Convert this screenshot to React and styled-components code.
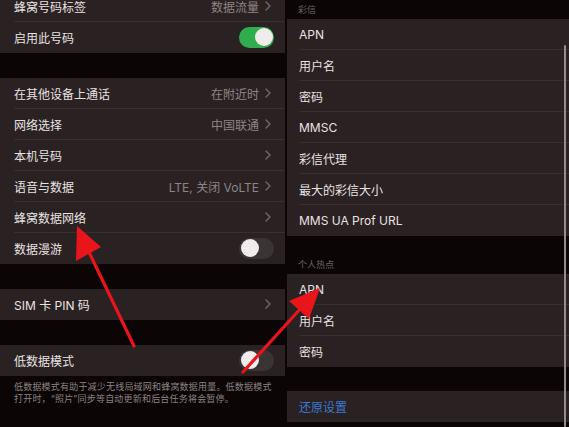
import React from 'react';
import styled, { createGlobalStyle } from 'styled-components';

const GlobalStyle = createGlobalStyle`
  html, body {
    margin: 0;
    padding: 0;
    background: #0c0506;
  }
  body {
    width: 569px;
    height: 427px;
    overflow: hidden;
    font-family: "Inter", "Noto Sans CJK SC", sans-serif;
  }
`;

const Page = styled.div`
  position: relative;
  width: 569px;
  height: 427px;
  display: flex;
  gap: 2px;
  overflow: hidden;
  background: #0c0506;
`;

const Panel = styled.div`
  position: relative;
  width: ${(p) => p.width}px;
  flex-shrink: 0;
  overflow: hidden;
  display: flex;
  flex-direction: column;
`;

const Scroll = styled.div`
  display: flex;
  flex-direction: column;
  margin-top: ${(p) => p.offset || 0}px;
`;

const Group = styled.div`
  background: #2a2122;
`;

const Row = styled.div`
  position: relative;
  height: 31px;
  display: flex;
  align-items: center;
  justify-content: space-between;
  padding: 0 ${(p) => p.padRight || 14}px 0 ${(p) => p.padLeft || 14}px;
  box-sizing: border-box;

  &:not(:last-child)::after {
    content: '';
    position: absolute;
    left: ${(p) => p.padLeft || 14}px;
    right: 0;
    bottom: 0;
    height: 1px;
    background: #382f30;
  }
`;

const Label = styled.span`
  font-size: 12px;
  color: ${(p) => (p.link ? '#3b7ad2' : '#e8e3e3')};
  white-space: nowrap;
`;

const Trail = styled.span`
  display: flex;
  align-items: center;
  gap: 6px;
`;

const Value = styled.span`
  font-size: 12px;
  color: #8b8586;
  white-space: nowrap;
`;

const Gap = styled.div`
  height: ${(p) => p.h}px;
`;

const Header = styled.div`
  height: ${(p) => p.h}px;
  box-sizing: border-box;
  display: flex;
  align-items: flex-end;
  padding: 0 0 4px 11px;
  font-size: 9px;
  line-height: 11px;
  color: #6d6667;
`;

const Note = styled.div`
  padding: 5px 10px 0 14px;
  font-size: 9px;
  letter-spacing: 0.2px;
  line-height: 12px;
  color: #8a8384;
`;

const Switch = styled.span`
  width: 35px;
  height: 21px;
  box-sizing: border-box;
  border-radius: 11px;
  padding: 0 1.5px;
  display: flex;
  align-items: center;
  justify-content: ${(p) => (p.on ? 'flex-end' : 'flex-start')};
  background: ${(p) => (p.on ? '#30ad4f' : '#3b3435')};
  margin-right: -3px;
`;

const Knob = styled.span`
  width: 18px;
  height: 18px;
  border-radius: 50%;
  background: #f1ecec;
`;

const ScrollBar = styled.div`
  position: absolute;
  right: 3px;
  top: 45px;
  bottom: 0;
  width: 2px;
  border-radius: 1px;
  background: #938d8e;
`;

const Overlay = styled.svg`
  position: absolute;
  left: 0;
  top: 0;
  pointer-events: none;
`;

const Chevron = () => (
  <svg width="6" height="10" viewBox="0 0 6 10">
    <path d="M1 1 L5 5 L1 9" fill="none" stroke="#6f6869" strokeWidth="1.4" strokeLinecap="round" strokeLinejoin="round" />
  </svg>
);

const NavRow = ({ label, value }) => (
  <Row>
    <Label>{label}</Label>
    <Trail>
      {value && <Value>{value}</Value>}
      <Chevron />
    </Trail>
  </Row>
);

const ToggleRow = ({ label, on }) => (
  <Row>
    <Label>{label}</Label>
    <Switch on={on ? 1 : 0}>
      <Knob />
    </Switch>
  </Row>
);

const mmsItems = ['APN', '用户名', '密码', 'MMSC', '彩信代理', '最大的彩信大小', 'MMS UA Prof URL'];
const hotspotItems = ['APN', '用户名', '密码'];

export default function App() {
  return (
    <Page>
      <GlobalStyle />
      <Panel width={285}>
        <Scroll offset={-9.5}>
          <Group>
            <NavRow label="蜂窝号码标签" value="数据流量" />
            <ToggleRow label="启用此号码" on />
          </Group>
          <Gap h={25} />
          <Group>
            <NavRow label="在其他设备上通话" value="在附近时" />
            <NavRow label="网络选择" value="中国联通" />
            <NavRow label="本机号码" />
            <NavRow label="语音与数据" value="LTE, 关闭 VoLTE" />
            <NavRow label="蜂窝数据网络" />
            <ToggleRow label="数据漫游" />
          </Group>
          <Gap h={25} />
          <Group>
            <NavRow label="SIM 卡 PIN 码" />
          </Group>
          <Gap h={25} />
          <Group>
            <ToggleRow label="低数据模式" />
          </Group>
          <Note>
            低数据模式有助于减少无线局域网和蜂窝数据用量。低数据模式
            <br />
            打开时，“照片”同步等自动更新和后台任务将会暂停。
          </Note>
        </Scroll>
      </Panel>

      <Panel width={282}>
        <Scroll>
          <Header h={18.5}>彩信</Header>
          <Group>
            {mmsItems.map((item) => (
              <Row key={item} padLeft={12}>
                <Label>{item}</Label>
              </Row>
            ))}
          </Group>
          <Header h={38}>个人热点</Header>
          <Group>
            {hotspotItems.map((item) => (
              <Row key={item} padLeft={12}>
                <Label>{item}</Label>
              </Row>
            ))}
          </Group>
          <Gap h={24} />
          <Group>
            <Row padLeft={12}>
              <Label link>还原设置</Label>
            </Row>
          </Group>
        </Scroll>
        <ScrollBar />
      </Panel>

      <Overlay width="569" height="427" viewBox="0 0 569 427">
        <g fill="#e8151b" stroke="#e8151b">
          <line x1="134" y1="346" x2="88" y2="250" strokeWidth="3.2" strokeLinecap="round" />
          <polygon points="77,226 101,247 76,261" stroke="none" />
          <line x1="243" y1="372" x2="302" y2="307" strokeWidth="3.2" strokeLinecap="round" />
          <polygon points="320,288 309,319 289,301" stroke="none" />
        </g>
      </Overlay>
    </Page>
  );
}
